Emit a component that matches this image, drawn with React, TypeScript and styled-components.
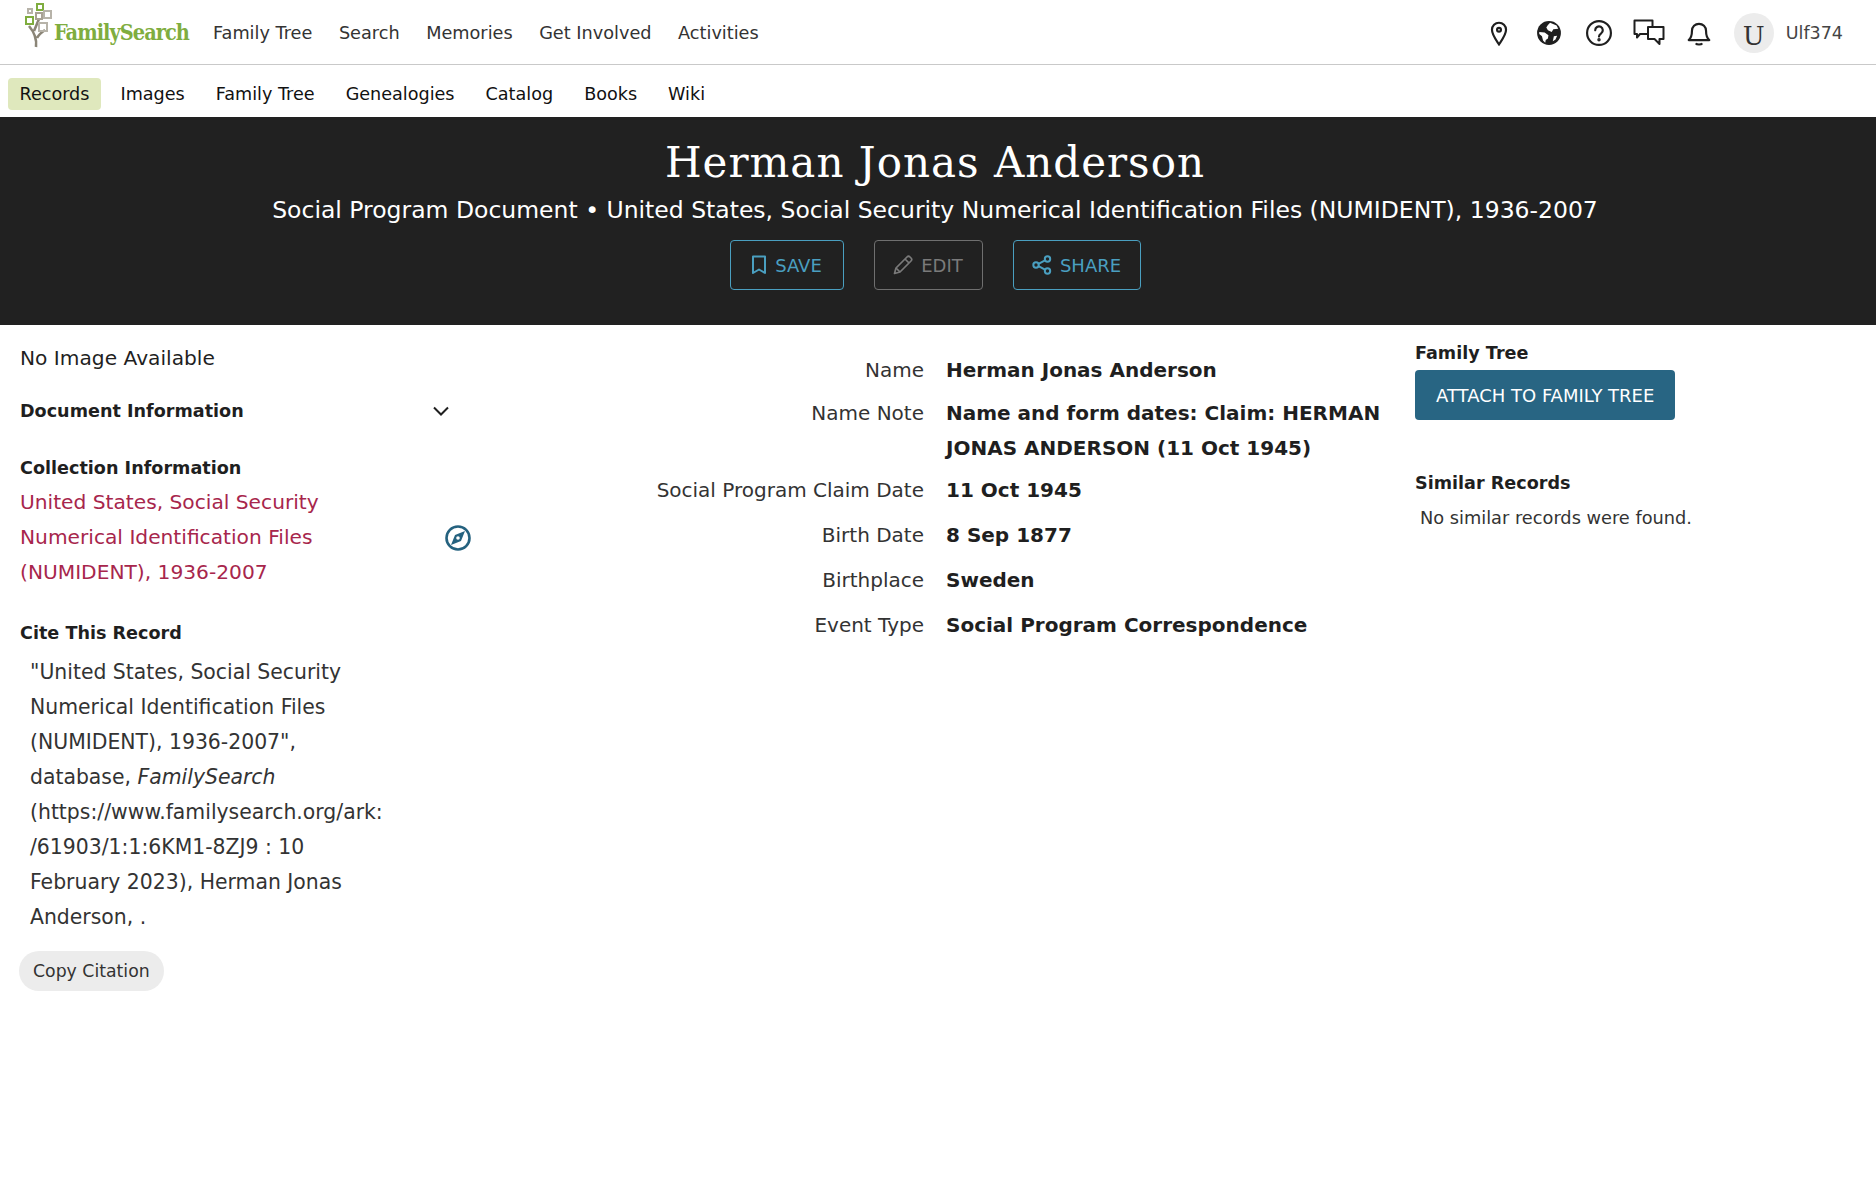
import React from 'react';
import styled, { createGlobalStyle, css } from 'styled-components';

const GlobalStyle = createGlobalStyle`
    html, body {
        margin: 0;
        padding: 0;
        background: #fff;
        font-family: "DejaVu Sans", sans-serif;
        color: #1f1f1f;
    }
`;

const TOP_LINKS = ['Family Tree', 'Search', 'Memories', 'Get Involved', 'Activities'];
const SUB_LINKS = ['Records', 'Images', 'Family Tree', 'Genealogies', 'Catalog', 'Books', 'Wiki'];

const DETAILS: { label: string; value: string; multi?: boolean }[] = [
    { label: 'Name', value: 'Herman Jonas Anderson' },
    { label: 'Name Note', value: 'Name and form dates: Claim: HERMAN JONAS ANDERSON (11 Oct 1945)', multi: true },
    { label: 'Social Program Claim Date', value: '11 Oct 1945' },
    { label: 'Birth Date', value: '8 Sep 1877' },
    { label: 'Birthplace', value: 'Sweden' },
    { label: 'Event Type', value: 'Social Program Correspondence' }
];

const Logo = () => (
    <LogoWrap>
        <LogoMark width="40" height="46" viewBox="0 0 40 46" fill="none">
            <path d="M12 45 C13 37 11 31 5 24 M13 36 C15 32 18 30 21 28 M10 29 L15 17" stroke="#8b8577" strokeWidth="2.6" />
            <rect x="13" y="2" width="6" height="6" stroke="#7fad3f" strokeWidth="2" />
            <rect x="4" y="7" width="4" height="4" stroke="#b7b3a9" strokeWidth="2" />
            <rect x="12" y="11" width="6" height="6" stroke="#a8a194" strokeWidth="2" />
            <rect x="20" y="9" width="7" height="7" stroke="#b7b3a9" strokeWidth="2" />
            <rect x="2" y="15" width="7" height="7" stroke="#7fad3f" strokeWidth="2" />
            <rect x="15" y="21" width="8" height="8" stroke="#b7b3a9" strokeWidth="2" />
        </LogoMark>
        <LogoText>FamilySearch</LogoText>
    </LogoWrap>
);

const PinIcon = () => (
    <svg width="26" height="26" viewBox="0 0 24 24" fill="none" stroke="#1f1f1f" strokeWidth="2">
        <path d="M12 22.5 C9 18 5.5 13.5 5.5 9 a6.5 6.5 0 0 1 13 0 C18.5 13.5 15 18 12 22.5 Z" />
        <circle cx="12" cy="9" r="1.8" />
    </svg>
);

const GlobeIcon = () => (
    <svg width="26" height="26" viewBox="0 0 24 24">
        <circle cx="12" cy="12" r="11" fill="#1f1f1f" />
        <path d="M13 2.5 L19 5 L20.5 8 L16 8.5 L14.5 11 L11 9.5 L9.5 7 L11 4.5 Z" fill="#fff" />
        <path d="M3 11 L8 11.5 L11.5 14 L11 17 L9 18.5 L8.5 21 L6.5 19 L5.5 15 L3 13 Z" fill="#fff" />
        <path d="M16.5 15 L19.5 14.5 L18 18 L15.5 19.5 Z" fill="#fff" />
    </svg>
);

const HelpIcon = () => (
    <svg width="26" height="26" viewBox="0 0 24 24" fill="none" stroke="#1f1f1f" strokeWidth="2">
        <circle cx="12" cy="12" r="11" />
        <path d="M8.5 9.5 a3.5 3.5 0 1 1 5.5 2.8 c-1.3 .9 -2 1.5 -2 3" strokeLinecap="round" />
        <circle cx="12" cy="18.2" r="0.6" fill="#1f1f1f" />
    </svg>
);

const ChatIcon = () => (
    <svg width="32" height="28" viewBox="0 0 32 28" fill="none" stroke="#1f1f1f" strokeWidth="2" strokeLinejoin="round">
        <path d="M14 15 H7 L4 18.5 V15 H1.5 V1.5 H19.5 V7" />
        <path d="M15 8 H30.5 V20 H26.5 V25 L21.5 20 H15 Z" />
    </svg>
);

const BellIcon = () => (
    <svg width="26" height="26" viewBox="0 0 24 24" fill="none" stroke="#1f1f1f" strokeWidth="2" strokeLinejoin="round">
        <path d="M2.5 18.5 C5 16.5 5.5 14 5.5 10 a6.5 6.5 0 0 1 13 0 C18.5 14 19 16.5 21.5 18.5 Z" />
        <path d="M9 21.5 C10 23 14 23 15 21.5" />
    </svg>
);

const BookmarkIcon = () => (
    <svg width="16" height="20" viewBox="0 0 16 20" fill="none" stroke="currentColor" strokeWidth="2" strokeLinejoin="round">
        <path d="M2 1.5 H14 V18 L8 14.5 L2 18 Z" />
    </svg>
);

const PencilIcon = () => (
    <svg width="20" height="20" viewBox="0 0 20 20" fill="none" stroke="currentColor" strokeWidth="1.7" strokeLinejoin="round">
        <path d="M1.5 18.5 L3 13 L14 2 C15 1 16 1 17 2 L18 3 C19 4 19 5 18 6 L7 17 Z" />
        <path d="M12 4 L16 8 M3 13 L7 17" />
    </svg>
);

const ShareIcon = () => (
    <svg width="20" height="20" viewBox="0 0 20 20" fill="none" stroke="currentColor" strokeWidth="2">
        <circle cx="4" cy="10" r="2.7" />
        <circle cx="15.5" cy="4" r="2.7" />
        <circle cx="15.5" cy="16" r="2.7" />
        <path d="M6.5 8.8 L13 5.3 M6.5 11.2 L13 14.7" />
    </svg>
);

const ChevronIcon = () => (
    <svg width="18" height="12" viewBox="0 0 18 12" fill="none" stroke="#1f1f1f" strokeWidth="2">
        <path d="M2 2.5 L9 9.5 L16 2.5" />
    </svg>
);

const CompassIcon = () => (
    <svg width="26" height="26" viewBox="0 0 26 26" fill="none">
        <circle cx="13" cy="13" r="11.5" stroke="#25627f" strokeWidth="2.6" />
        <path d="M20 6 L16 16 L6 20 L10 10 Z" fill="#25627f" />
        <circle cx="13" cy="13" r="1.8" fill="#fff" />
    </svg>
);

export default function App() {
    return (
        <>
            <GlobalStyle />
            <TopBar>
                <TopLeft>
                    <Logo />
                    <TopNav>
                        {TOP_LINKS.map((l) => (
                            <TopLink key={l}>{l}</TopLink>
                        ))}
                    </TopNav>
                </TopLeft>
                <TopRight>
                    <IconSlot><PinIcon /></IconSlot>
                    <IconSlot><GlobeIcon /></IconSlot>
                    <IconSlot><HelpIcon /></IconSlot>
                    <IconSlot><ChatIcon /></IconSlot>
                    <IconSlot><BellIcon /></IconSlot>
                    <Avatar>U</Avatar>
                    <UserName>Ulf374</UserName>
                </TopRight>
            </TopBar>
            <SubBar>
                {SUB_LINKS.map((l, i) => (
                    <SubLink key={l} $active={i === 0}>{l}</SubLink>
                ))}
            </SubBar>
            <Banner>
                <Title>Herman Jonas Anderson</Title>
                <Subtitle>
                    Social Program Document • United States, Social Security Numerical Identification Files (NUMIDENT), 1936-2007
                </Subtitle>
                <BannerActions>
                    <ActionButton $w={114}><BookmarkIcon />SAVE</ActionButton>
                    <ActionButton $w={109} $disabled><PencilIcon />EDIT</ActionButton>
                    <ActionButton $w={128}><ShareIcon />SHARE</ActionButton>
                </BannerActions>
            </Banner>
            <Main>
                <LeftCol>
                    <NoImage>No Image Available</NoImage>
                    <DocHeading>
                        <SectionTitle>Document Information</SectionTitle>
                        <ChevronIcon />
                    </DocHeading>
                    <SectionTitle>Collection Information</SectionTitle>
                    <CollectionRow>
                        <CollectionLink>
                            United States, Social Security Numerical Identification Files (NUMIDENT), 1936-2007
                        </CollectionLink>
                        <CompassIcon />
                    </CollectionRow>
                    <SectionTitle>Cite This Record</SectionTitle>
                    <Citation>
                        "United States, Social Security Numerical Identification Files (NUMIDENT), 1936-2007",
                        database, <em>FamilySearch</em> (https://www.familysearch.org/ark:<wbr />/61903/1:1:6KM1-8ZJ9 : 10 February 2023), Herman Jonas Anderson, .
                    </Citation>
                    <CopyButton>Copy Citation</CopyButton>
                </LeftCol>
                <DetailGrid>
                    {DETAILS.map((d) => (
                        <React.Fragment key={d.label}>
                            <DetailLabel $multi={d.multi}>{d.label}</DetailLabel>
                            <DetailValue $multi={d.multi}>{d.value}</DetailValue>
                        </React.Fragment>
                    ))}
                </DetailGrid>
                <RightCol>
                    <SectionTitle>Family Tree</SectionTitle>
                    <AttachButton>ATTACH TO FAMILY TREE</AttachButton>
                    <SimilarTitle>Similar Records</SimilarTitle>
                    <SimilarText>No similar records were found.</SimilarText>
                </RightCol>
            </Main>
        </>
    );
}

const TopBar = styled.header`
    height: 64px;
    border-bottom: 1px solid #c9c9c9;
    display: flex;
    align-items: center;
    justify-content: space-between;
    padding: 0 33px 0 24px;
`;

const TopLeft = styled.div`
    display: flex;
    align-items: center;
`;

const LogoWrap = styled.div`
    display: flex;
    align-items: flex-end;
    height: 46px;
    margin-top: -14px;
    width: 189px;
`;

const LogoMark = styled.svg`
    flex: none;
`;

const LogoText = styled.span`
    font-family: "DejaVu Serif", serif;
    font-stretch: condensed;
    font-weight: 700;
    font-size: 21.5px;
    letter-spacing: -0.95px;
    color: #7fad3f;
    margin-left: -10px;
    line-height: 26px;
    margin-bottom: 2px;
`;

const TopNav = styled.nav`
    display: flex;
    gap: 26.5px;
    padding-top: 1px;
`;

const TopLink = styled.span`
    font-size: 17.7px;
    color: #333;
`;

const TopRight = styled.div`
    display: flex;
    align-items: center;
    padding-top: 1px;
`;

const IconSlot = styled.div`
    width: 50px;
    display: flex;
    justify-content: center;
`;

const Avatar = styled.div`
    width: 40px;
    height: 40px;
    border-radius: 50%;
    background: #ececec;
    font-family: "DejaVu Serif", serif;
    font-size: 26px;
    color: #333;
    display: flex;
    align-items: center;
    justify-content: center;
    padding-top: 6px;
    box-sizing: border-box;
    margin-left: 10px;
`;

const UserName = styled.span`
    font-size: 17.5px;
    color: #444;
    margin-left: 12px;
    padding-top: 1px;
`;

const SubBar = styled.nav`
    height: 52px;
    display: flex;
    align-items: center;
    padding: 5px 0 0 8px;
    gap: 8px;
    box-sizing: border-box;
`;

const SubLink = styled.span<{ $active?: boolean }>`
    font-size: 17.6px;
    color: #111;
    padding: 6px 11.5px;
    border-radius: 4px;
    background: ${({ $active }) => ($active ? '#dfe8bd' : 'transparent')};
`;

const Banner = styled.section`
    background: #212121;
    height: 208px;
    box-sizing: border-box;
    padding: 22px 6px 0 0;
    display: flex;
    flex-direction: column;
    align-items: center;
`;

const Title = styled.h1`
    margin: 0;
    font-family: "DejaVu Serif", serif;
    font-weight: 400;
    font-size: 42px;
    line-height: 48px;
    letter-spacing: 1px;
    color: #fff;
`;

const Subtitle = styled.div`
    font-size: 23.5px;
    line-height: 30px;
    margin-top: 8px;
    color: #fff;
`;

const BannerActions = styled.div`
    display: flex;
    gap: 30px;
    margin-top: 15px;
`;

const ActionButton = styled.div<{ $w: number; $disabled?: boolean }>`
    width: ${({ $w }) => $w}px;
    height: 50px;
    box-sizing: border-box;
    border: 1px solid ${({ $disabled }) => ($disabled ? '#6f6f6f' : '#4a9fc0')};
    border-radius: 4px;
    color: ${({ $disabled }) => ($disabled ? '#7a7a7a' : '#4a9fc0')};
    font-size: 18px;
    display: flex;
    align-items: center;
    justify-content: center;
    gap: 8px;
`;

const Main = styled.main`
    display: flex;
    align-items: flex-start;
`;

const LeftCol = styled.aside`
    width: 480px;
    padding: 19px 0 0 20px;
    box-sizing: border-box;
`;

const NoImage = styled.div`
    font-size: 20.2px;
    line-height: 28px;
    color: #1f1f1f;
`;

const SectionTitle = styled.div`
    font-size: 17.6px;
    font-weight: 700;
    line-height: 24px;
    color: #1f1f1f;
`;

const DocHeading = styled.div`
    display: flex;
    align-items: center;
    justify-content: space-between;
    width: 430px;
    margin: 27px 0 33px;
`;

const CollectionRow = styled.div`
    display: flex;
    align-items: center;
    justify-content: space-between;
    width: 451px;
    margin: 5px 0 31px;
`;

const CollectionLink = styled.a`
    display: block;
    width: 330px;
    font-size: 20.2px;
    line-height: 35px;
    color: #a7264c;
`;

const Citation = styled.div`
    width: 360px;
    padding-left: 10px;
    margin-top: 10px;
    font-size: 20.4px;
    line-height: 35px;
    color: #333;
`;

const CopyButton = styled.div`
    width: fit-content;
    margin: 16px 0 0 -1px;
    padding: 0 14px;
    height: 40px;
    line-height: 40px;
    border-radius: 20px;
    background: #ececec;
    font-size: 17.3px;
    color: #333;
`;

const DetailGrid = styled.div`
    width: 915px;
    padding-top: 28px;
    display: grid;
    grid-template-columns: 444px 1fr;
    column-gap: 22px;
    row-gap: 10px;
`;

// the two-line row sits a little closer to its neighbours
const multiRow = css<{ $multi?: boolean }>`
    ${({ $multi }) => $multi && 'margin: -2px 0 -3px;'}
`;

const DetailLabel = styled.div<{ $multi?: boolean }>`
    text-align: right;
    font-size: 20px;
    line-height: 35px;
    color: #333;
    ${multiRow}
`;

const DetailValue = styled.div<{ $multi?: boolean }>`
    font-size: 20px;
    font-weight: 700;
    line-height: 35px;
    color: #1f1f1f;
    ${multiRow}
`;

const RightCol = styled.aside`
    padding: 16px 0 0 20px;
`;

const AttachButton = styled.div`
    width: fit-content;
    margin-top: 5px;
    height: 50px;
    line-height: 52px;
    padding: 0 21px;
    background: #286583;
    border-radius: 4px;
    color: #fff;
    font-size: 18px;
`;

const SimilarTitle = styled(SectionTitle)`
    margin-top: 51px;
`;

const SimilarText = styled.div`
    font-size: 17.75px;
    line-height: 30px;
    padding: 8px 0 0 5px;
    color: #333;
`;
